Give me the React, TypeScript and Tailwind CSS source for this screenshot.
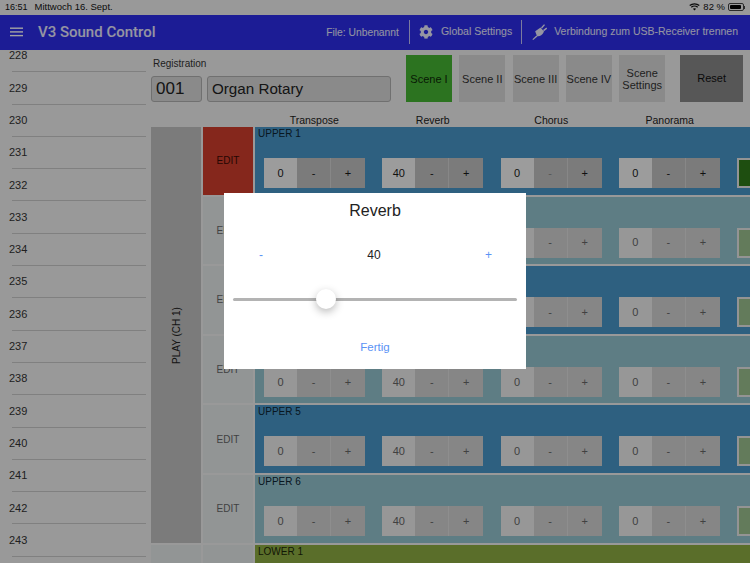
import React from "react";
import { FaCog } from "react-icons/fa";

const font = { fontFamily: '"Liberation Sans", Arial, sans-serif' };

const sidebarNumbers = Array.from({ length: 16 }, (_, i) => 228 + i);

const rows = [
  { label: "UPPER 1", tone: "dark", active: true },
  { label: "UPPER 2", tone: "light" },
  { label: "UPPER 3", tone: "dark" },
  { label: "UPPER 4", tone: "light" },
  { label: "UPPER 5", tone: "dark" },
  { label: "UPPER 6", tone: "light" },
];

const controls = [
  { value: "0" },
  { value: "40" },
  { value: "0", disabled: true },
  { value: "0" },
];

function PlugIcon() {
  return (
    <svg width="17" height="18" viewBox="0 0 17 18" className="ml-[9px] shrink-0" fill="#fff" fillOpacity="0.9">
      <path d="M4.2 8.2L9.6 4.4L13 8.6C11.8 12 8.6 13.8 6 13.2Z" />
      <path d="M10 4.6L13 1.2L14 2.1L11.1 5.6Z" />
      <path d="M12 7L15.4 4.6L16.1 5.7L13 8.2Z" />
      <path d="M5.4 12.4L1.4 16.2L2.2 17L6.4 13.4Z" />
    </svg>
  );
}

function Stepper({ value, active, disabled }: { value: string; active?: boolean; disabled?: boolean }) {
  const btn = active ? "bg-[#c0c0c0]" : "bg-[#d2d2d2]";
  const text = active ? "text-[#1a1a1a]" : "text-[#666]";
  return (
    <div className={`flex h-[30px] w-[101px] shrink-0 text-[11px] ${text}`}>
      <div className={`flex w-[33px] items-center justify-center ${active ? "bg-[#f5f5f5]" : "bg-[#ededed]"}`}>{value}</div>
      <div className={`flex w-[34px] items-center justify-center border-r border-white/30 ${btn} ${disabled ? "text-[#888]" : ""}`}>-</div>
      <div className={`flex w-[34px] items-center justify-center ${btn}`}>+</div>
    </div>
  );
}

function Row({ label, tone, active }: { label: string; tone: string; active?: boolean }) {
  const bg = tone === "dark" ? "bg-[#4996c8]" : "bg-[#94c4cf]";
  return (
    <div className="flex h-[67.6px] shrink-0 gap-[2px]">
      <div
        className={`flex w-[50px] shrink-0 items-center justify-center text-[10px] ${
          active ? "bg-[#d03e2c] text-[#3a0b05]" : "bg-[#e4eaea] text-[#666]"
        }`}
      >
        EDIT
      </div>
      <div className={`flex-1 pl-[3px] ${bg}`}>
        <div className="h-[31px] pt-[1px] text-[10px] leading-[12px] text-[#0d2533]">{label}</div>
        <div className="flex items-start gap-[17.3px] pl-[6px]">
          {controls.map((c, i) => (
            <Stepper key={i} value={c.value} active={active} disabled={c.disabled && active} />
          ))}
          <div className={`h-[30px] w-[30px] shrink-0 border-[2px] border-[#e8e8e8] ${active ? "bg-[#307b19]" : "bg-[#9cc08f]"}`} />
        </div>
      </div>
    </div>
  );
}

function SceneButton({ children, active }: { children: React.ReactNode; active?: boolean }) {
  return (
    <div
      className={`flex h-[47px] w-[46px] shrink-0 items-center justify-center text-center text-[11px] leading-[12px] ${
        active ? "bg-[#46b432] text-[#0d2a08]" : "bg-[#d8d8d8] text-[#333]"
      }`}
    >
      {children}
    </div>
  );
}

export default function App() {
  return (
    <div className="relative h-[563px] w-[750px] overflow-hidden bg-[#f0f0f0]" style={font}>
      {/* Status bar */}
      <div className="flex h-[14.5px] items-center justify-between pl-[5px] pr-[5px] text-[9.5px] text-[#111]">
        <div className="flex items-center gap-[7px]">
          <span className="text-[9px]">16:51</span>
          <span>Mittwoch 16. Sept.</span>
        </div>
        <div className="flex items-center gap-[3px]">
          <svg width="11" height="8" viewBox="0 0 11 8" fill="none" stroke="#111" strokeWidth="1.3">
            <path d="M0.7 2.6C3.4 0.2 7.6 0.2 10.3 2.6" />
            <path d="M2.3 4.2C4 2.8 7 2.8 8.7 4.2" />
            <path d="M5.5 7.6L3.9 5.8C4.8 5.1 6.2 5.1 7.1 5.8Z" fill="#111" stroke="none" />
          </svg>
          <span>82 %</span>
          <div className="flex items-center">
            <div className="h-[8px] w-[16px] rounded-[2px] border border-[#444] p-[1px]">
              <div className="h-full w-[11px] rounded-[1px] bg-[#000]" />
            </div>
            <div className="h-[3px] w-[1px] bg-[#444]" />
          </div>
        </div>
      </div>

      {/* App bar */}
      <div className="flex h-[35.5px] items-center bg-[#2c2cea] pl-[10px] pr-[12px] text-white/90">
        <svg width="14" height="10" viewBox="0 0 14 10" fill="#fff">
          <rect y="0.5" width="13" height="1.4" />
          <rect y="4.2" width="13" height="1.4" />
          <rect y="7.9" width="13" height="1.4" />
        </svg>
        <div className="ml-[14px] text-[15px] font-medium" style={{ fontFamily: "Roboto, sans-serif" }}>
          V3 Sound Control
        </div>
        <div className="ml-auto text-[10.3px]">File: Unbenannt</div>
        <div className="ml-[10px] h-[24px] w-[1px] bg-white/70" />
        <FaCog className="ml-[9px] h-[14px] w-[14px]" />
        <div className="ml-[8px] text-[10.5px]">Global Settings</div>
        <div className="ml-[9px] h-[24px] w-[1px] bg-white/70" />
        <PlugIcon />
        <div className="ml-[6px] text-[10.5px]">Verbindung zum USB-Receiver trennen</div>
      </div>

      {/* Content */}
      <div className="flex h-[513px]">
        <div className="flex h-full w-[151px] shrink-0 flex-col overflow-hidden">
          <div className="-mt-[10px]">
            {sidebarNumbers.map((n) => (
              <div key={n} className="ml-[12px] mr-[5px] flex h-[32.3px] items-center border-b border-[#c8c8c8] -indent-[3px] text-[11px] text-[#333]">
                {n}
              </div>
            ))}
          </div>
        </div>
        <div className="min-w-0 flex-1">
          {/* Top controls */}
          <div className="flex h-[61px] pt-[5px]">
            <div className="w-[255px] shrink-0">
              <div className="pl-[2px] pt-[3px] text-[10px] leading-[12px] text-[#333]">Registration</div>
              <div className="mt-[6px] flex gap-[5px]">
                <div className="flex h-[26px] w-[51px] items-center rounded-[3px] border border-[#b0b0b0] bg-[#d8d8d8] pl-[4px] text-[17px] text-[#222]">001</div>
                <div className="flex h-[26px] w-[184px] items-center rounded-[3px] border border-[#b0b0b0] bg-[#d8d8d8] pl-[4px] text-[15.2px] text-[#222]">Organ Rotary</div>
              </div>
            </div>
            <div className="flex gap-[7.3px]">
              <SceneButton active>Scene I</SceneButton>
              <SceneButton>Scene II</SceneButton>
              <SceneButton>Scene III</SceneButton>
              <SceneButton>Scene IV</SceneButton>
              <SceneButton>Scene Settings</SceneButton>
            </div>
            <div className="ml-[15px] flex h-[47px] w-[63px] items-center justify-center bg-[#888888] text-[11px] text-[#111]">Reset</div>
          </div>
          <div className="flex h-[16px] items-end pl-[104px] text-[10.5px] leading-[14px] text-[#222]">
            <div className="w-[118.5px] text-center">Transpose</div>
            <div className="w-[118.5px] text-center">Reverb</div>
            <div className="w-[118.5px] text-center">Chorus</div>
            <div className="w-[118.5px] text-center">Panorama</div>
          </div>

          {/* Channel grid */}
          <div className="flex gap-[2px]">
            <div className="flex h-[416px] w-[50px] shrink-0 items-center justify-center bg-[#c0c0c0]">
              <div className="-rotate-90 whitespace-nowrap text-[10px] text-[#222]">PLAY (CH 1)</div>
            </div>
            <div className="flex min-w-0 flex-1 flex-col gap-[2px]">
              {rows.map((r) => (
                <Row key={r.label} label={r.label} tone={r.tone} active={r.active} />
              ))}
            </div>
          </div>
          <div className="mt-[2px] flex gap-[2px]">
            <div className="h-[20px] w-[50px] shrink-0 bg-[#e4eaea]" />
            <div className="h-[20px] w-[50px] shrink-0 bg-[#e4eaea]" />
            <div className="h-[20px] flex-1 bg-[#8dad43] pl-[3px] pt-[1px] text-[10px] leading-[12px] text-[#1c2608]">LOWER 1</div>
          </div>
        </div>
      </div>

      {/* Dimmed backdrop */}
      <div className="absolute inset-0 bg-black/36" />

      {/* Reverb dialog */}
      <div className="absolute left-[224px] top-[193px] flex h-[176px] w-[302px] flex-col bg-white px-[9px] text-[#222]">
        <div className="pt-[8px] text-center text-[16px] leading-[19px]">Reverb</div>
        <div className="mt-[27px] flex h-[16px] items-center justify-between pl-[26px] pr-[25px] text-[12px]">
          <span className="text-[#5b93f5]">-</span>
          <span>40</span>
          <span className="text-[#5b93f5]">+</span>
        </div>
        <div className="relative mt-[35px] h-[3px] rounded-full bg-[#b3b3b3]">
          <div className="absolute left-[83px] top-[-9px] h-[20px] w-[20px] rounded-full bg-white shadow-[0_3px_8px_rgba(0,0,0,0.28)]" />
        </div>
        <div className="mt-[38px] text-center text-[11.5px] text-[#5b93f5]">Fertig</div>
      </div>
    </div>
  );
}
